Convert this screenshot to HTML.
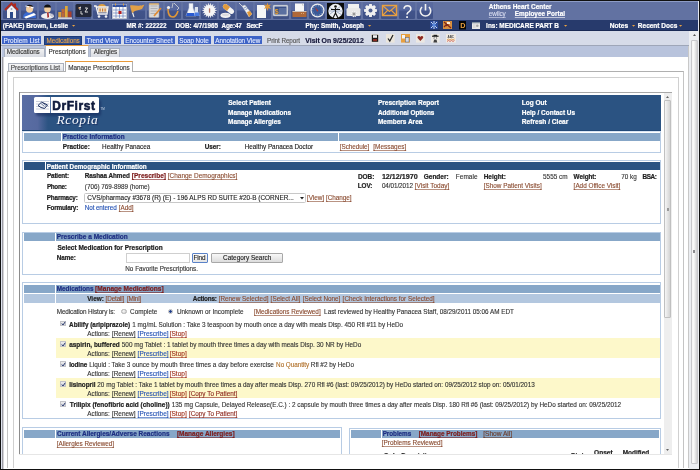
<!DOCTYPE html>
<html><head><meta charset="utf-8">
<style>
html,body{margin:0;padding:0;}
body{width:700px;height:470px;overflow:hidden;position:relative;background:#fff;will-change:transform;font-family:"Liberation Sans",sans-serif;}
.b{position:absolute;box-sizing:border-box;}
.t{position:absolute;white-space:pre;font-family:"Liberation Sans",sans-serif;}
svg{position:absolute;overflow:visible;}
</style></head><body>
<!-- frame -->
<div class="b" style="left:0;top:0;width:700px;height:1px;background:#111"></div>
<div class="b" style="left:0;top:0;width:1px;height:470px;background:#111"></div>
<div class="b" style="left:1px;top:31px;width:1px;height:438px;background:#dfe3ee"></div>
<div class="b" style="left:2px;top:46px;width:1px;height:423px;background:#9c9ca4"></div>
<div class="b" style="left:3px;top:46px;width:1px;height:423px;background:#d4d4d8"></div>
<div class="b" style="left:0;top:468.5px;width:700px;height:1.5px;background:#111"></div>
<div class="b" style="left:698px;top:1px;width:1px;height:468px;background:#e2e6f0"></div>
<div class="b" style="left:698.6px;top:0;width:1.4px;height:470px;background:#111"></div>
<!-- toolbar -->
<div class="b" style="left:1px;top:1px;width:697px;height:19px;background:#6272a2;border-top:1px solid #8d9cc6"></div>
<!-- navy bar -->
<div class="b" style="left:1px;top:20px;width:697px;height:10.5px;background:#273a6c;border-bottom:1px solid #1a2a55"></div>
<!-- light bar -->
<div class="b" style="left:1px;top:30.5px;width:689px;height:15px;background:#d6dbe8;border-bottom:1px solid #9ea6b8"></div>
<!-- blue buttons -->
<div class="b" style="left:2px;top:36px;width:39px;height:8px;background:#3d63c6"></div>
<div class="b" style="left:44px;top:35.5px;width:38px;height:9px;background:#2b4b8e;border:1px solid #1d3a78"></div>
<div class="b" style="left:85px;top:36px;width:36px;height:8px;background:#3d63c6"></div>
<div class="b" style="left:123.7px;top:36px;width:51.2px;height:8px;background:#3d63c6"></div>
<div class="b" style="left:177.7px;top:36px;width:33px;height:8px;background:#3d63c6"></div>
<div class="b" style="left:213.7px;top:36px;width:48.6px;height:8px;background:#3d63c6"></div>
<!-- tab strip -->
<div class="b" style="left:2px;top:46px;width:687px;height:11px;background:#b8c3dc"></div>
<div class="b" style="left:4px;top:47.6px;width:40.6px;height:9.4px;background:linear-gradient(#f2f2f2,#d8dbe2);border:1px solid #a8b0c0;border-bottom:none"></div>
<div class="b" style="left:45px;top:45.3px;width:44.2px;height:11.7px;background:#fff;border-top:1.5px solid #e89a3a;border-left:1px solid #b0b8c8;border-right:1px solid #b0b8c8"></div>
<div class="b" style="left:90.1px;top:47.6px;width:30px;height:9.4px;background:linear-gradient(#f2f2f2,#d8dbe2);border:1px solid #a8b0c0;border-bottom:none"></div>
<!-- content vertical lines -->
<div class="b" style="left:688px;top:46px;width:1px;height:422px;background:#c8c8c8"></div>
<!-- subtabs -->
<div class="b" style="left:7px;top:71px;width:677px;height:397px;border-left:1px solid #c4c4c4;border-top:1px solid #b0b0b0;border-right:1px solid #c4c4c4"></div>
<div class="b" style="left:8.4px;top:62.6px;width:56px;height:8.6px;background:linear-gradient(#f6f6f6,#dde0e6);border:1px solid #aab0bc;border-bottom:none"></div>
<div class="b" style="left:65px;top:61px;width:68px;height:11px;background:#fff;border-top:1.5px solid #e89a3a;border-left:1px solid #b0b0b0;border-right:1px solid #b0b0b0"></div>
<!-- inner frame -->
<div class="b" style="left:13px;top:77px;width:665.5px;height:391px;border-left:1px solid #d0d0d0;border-top:1px solid #d0d0d0;border-right:1px solid #d0d0d0"></div>
<!-- iframe border -->
<div class="b" style="left:19px;top:91.6px;width:653px;height:1.6px;background:#a8a8a8"></div>
<div class="b" style="left:19px;top:92px;width:1.2px;height:361.5px;background:#8c8c8c"></div>
<!-- inner scrollbar -->
<div class="b" style="left:663.5px;top:93px;width:8px;height:360.5px;background:#eeeeee"></div>
<div class="b" style="left:663.8px;top:100px;width:7px;height:218px;background:linear-gradient(90deg,#f6f6f6,#d4d4d4);border:1px solid #c0c0c0;border-radius:1px"></div>
<div class="b" style="left:667px;top:207.5px;width:2px;height:3px;background:#999"></div>
<svg style="left:666px;top:95.5px" width="3" height="2"><path d="M0 2L1.5 0L3 2Z" fill="#666"/></svg>
<svg style="left:666px;top:449px" width="3" height="2"><path d="M0 0L1.5 2L3 0Z" fill="#666"/></svg>
<!-- outer scrollbar -->
<div class="b" style="left:689px;top:31px;width:9.5px;height:437.5px;background:#eceef2"></div>
<div class="b" style="left:691px;top:39.5px;width:7.4px;height:424px;background:linear-gradient(90deg,#f4f4f4,#fafafa 35%,#d0d0d2);border:0.8px solid #c8c8cc;border-radius:1px"></div>
<div class="b" style="left:692.6px;top:249.5px;width:2.6px;height:3.6px;background:#8c8c90"></div>
<svg style="left:692.8px;top:34px" width="3" height="2"><path d="M0 2L1.5 0L3 2Z" fill="#555"/></svg>
<!-- DrFirst header -->
<div class="b" style="left:22px;top:95px;width:639px;height:35.8px;background:#2b5382"></div>
<div class="b" style="left:22px;top:95px;width:26px;height:35.8px;background:linear-gradient(90deg,#5a6ea4 0%,#56699f 60%,#2b5382 100%)"></div>
<div class="b" style="left:22px;top:129.6px;width:639px;height:1.2px;background:#234a78"></div>
<!-- logo -->
<div class="b" style="left:36px;top:99.5px;width:65px;height:16px;background:#14285a;opacity:.55;border-radius:2px;filter:blur(1px)"></div>
<div class="b" style="left:34.3px;top:97px;width:64.3px;height:16.3px;background:#fff;border-radius:1.5px"></div>
<div class="b" style="left:50.4px;top:97px;width:1.1px;height:16.3px;background:#5a78a8"></div>
<svg style="left:35px;top:99px" width="15" height="12"><path d="M1 2.5H14M1 5H14M1 7.5H14M1 10H14" stroke="#b4bccb" stroke-width=".7"/><path d="M3 6.5L6.5 3.2L9 4.2L12.5 6L9.5 9.5L6 8.5Z" fill="#eef1f6" stroke="#1d3060" stroke-width="1"/><path d="M6 4.5L9.5 7.5M8 4L11 6.5" stroke="#1d3060" stroke-width=".6"/></svg>
<span class="t" style="left:52.3px;top:98.7px;font-size:11.9px;line-height:14px;font-weight:bold;color:#0f1a3c;letter-spacing:0.6px;-webkit-text-stroke:0.6px #0f1a3c">DrFirst</span>
<span class="t" style="left:100.5px;top:108px;font-size:3px;line-height:3px;color:#cfd8e8">TM</span>
<span class="t" style="left:56.5px;top:111.5px;font-family:'Liberation Serif',serif;font-style:italic;font-size:13.5px;line-height:15px;color:#f4f6fa;letter-spacing:0.6px;text-shadow:1px 1px 1px #1a3060">Rcopia</span>
<!-- practice box -->
<div class="b" style="left:22px;top:131.4px;width:639px;height:21.8px;border:1px solid #b8cce4;border-top:1px solid #d8e4f2"></div>
<div class="b" style="left:24px;top:133px;width:37px;height:8px;background:#87a7c8"></div>
<div class="b" style="left:62px;top:133px;width:276px;height:8px;background:#87a7c8"></div>
<div class="b" style="left:339px;top:133px;width:321px;height:8px;background:#87a7c8"></div>
<!-- demographic box -->
<div class="b" style="left:22px;top:160.3px;width:639px;height:63.5px;border:1px solid #b8cce4"></div>
<div class="b" style="left:24px;top:162px;width:20.6px;height:8.3px;background:#2b5382"></div>
<div class="b" style="left:45.5px;top:162px;width:614.5px;height:8.3px;background:#2b5382"></div>
<div class="b" style="left:84.3px;top:192.8px;width:221.5px;height:10.4px;background:#fff;border:1px solid #c8c8c8;border-radius:1.5px"></div>
<svg style="left:299.5px;top:197px" width="4" height="3"><path d="M0 0L2 2.5L4 0Z" fill="#222"/></svg>
<!-- prescribe box -->
<div class="b" style="left:22px;top:231.6px;width:639px;height:43.2px;border:1px solid #b8cce4"></div>
<div class="b" style="left:24px;top:233.3px;width:30.8px;height:8.2px;background:#87a7c8"></div>
<div class="b" style="left:55.8px;top:233.3px;width:604.2px;height:8.2px;background:#87a7c8"></div>
<div class="b" style="left:125.5px;top:253px;width:64px;height:10px;background:#fff;border:1px solid #cfcfcf"></div>
<div class="b" style="left:192px;top:253px;width:16.4px;height:10px;background:linear-gradient(#fbfbfb,#e4e4e4);border:1px solid #5a82c8;border-radius:1px"></div>
<div class="b" style="left:211.4px;top:253px;width:71.7px;height:10px;background:linear-gradient(#f8f8f8,#dcdcdc);border:1px solid #a8a8a8;border-radius:1px"></div>
<!-- medications box -->
<div class="b" style="left:22px;top:282.3px;width:639px;height:137px;border:1px solid #b8cce4"></div>
<div class="b" style="left:24px;top:284.6px;width:30.8px;height:8px;background:#87a7c8"></div>
<div class="b" style="left:55.8px;top:284.6px;width:604.2px;height:8px;background:#87a7c8"></div>
<div class="b" style="left:24px;top:294px;width:30.8px;height:9.4px;background:#b3c7df"></div>
<div class="b" style="left:55.8px;top:294px;width:604.2px;height:9.4px;background:#b3c7df"></div>
<div class="b" style="left:56.3px;top:338.2px;width:603.7px;height:20px;background:#fdf8ca"></div>
<div class="b" style="left:56.3px;top:378px;width:603.7px;height:20px;background:#fdf8ca"></div>
<!-- radios -->
<div class="b" style="left:121px;top:308.6px;width:5.5px;height:5.5px;border-radius:50%;background:radial-gradient(circle at 40% 35%,#fafafa,#c4c4c4);border:0.6px solid #b0b0b0"></div>
<div class="b" style="left:167.8px;top:308.6px;width:5.5px;height:5.5px;border-radius:50%;background:radial-gradient(circle,#1f3a80 0,#2c4c98 50%,#a8b8dc 70%,#eef0f4 100%);border:0.6px solid #b8b8b8"></div>
<!-- checkboxes -->
<div class="b" style="left:59.8px;top:320.7px;width:5.8px;height:5.8px;border:0.8px solid #c4c4c8;background:linear-gradient(#ececec,#d4d6dc)"></div>
<div class="b" style="left:60px;top:341px;width:5.8px;height:5.8px;border:0.8px solid #c4c4c8;background:linear-gradient(#ececec,#d4d6dc)"></div>
<div class="b" style="left:60px;top:361px;width:5.8px;height:5.8px;border:0.8px solid #c4c4c8;background:linear-gradient(#ececec,#d4d6dc)"></div>
<div class="b" style="left:60px;top:381px;width:5.8px;height:5.8px;border:0.8px solid #c4c4c8;background:linear-gradient(#ececec,#d4d6dc)"></div>
<div class="b" style="left:60px;top:401px;width:5.8px;height:5.8px;border:0.8px solid #c4c4c8;background:linear-gradient(#ececec,#d4d6dc)"></div>
<svg style="left:60.7px;top:321.4px" width="5" height="5"><path d="M0.8 2.5L2 4L4.2 0.8" stroke="#2a3a70" stroke-width="1" fill="none"/></svg>
<svg style="left:60.9px;top:341.7px" width="5" height="5"><path d="M0.8 2.5L2 4L4.2 0.8" stroke="#2a3a70" stroke-width="1" fill="none"/></svg>
<svg style="left:60.9px;top:361.7px" width="5" height="5"><path d="M0.8 2.5L2 4L4.2 0.8" stroke="#2a3a70" stroke-width="1" fill="none"/></svg>
<svg style="left:60.9px;top:381.7px" width="5" height="5"><path d="M0.8 2.5L2 4L4.2 0.8" stroke="#2a3a70" stroke-width="1" fill="none"/></svg>
<svg style="left:60.9px;top:401.7px" width="5" height="5"><path d="M0.8 2.5L2 4L4.2 0.8" stroke="#2a3a70" stroke-width="1" fill="none"/></svg>
<!-- allergies box -->
<div class="b" style="left:22px;top:427.3px;width:319.5px;height:30px;border:1px solid #b8cce4;border-bottom:none"></div>
<div class="b" style="left:24px;top:429.6px;width:31.2px;height:8px;background:#87a7c8"></div>
<div class="b" style="left:56.2px;top:429.6px;width:284px;height:8px;background:#87a7c8"></div>
<!-- problems box -->
<div class="b" style="left:348.8px;top:427.5px;width:312.2px;height:30px;border:1px solid #b8cce4;border-bottom:none"></div>
<div class="b" style="left:350.8px;top:429.6px;width:29.9px;height:8px;background:#87a7c8"></div>
<div class="b" style="left:381.7px;top:429.6px;width:277.3px;height:8px;background:#87a7c8"></div>
<div class="b" style="left:2.5px;top:2px;width:16.5px;height:17px;background:linear-gradient(#5b6b9e 0%,#5668a0 48%,#41538a 52%,#3f5186 100%);border-radius:1px"></div>
<div class="b" style="left:20.5px;top:2px;width:16.5px;height:17px;background:linear-gradient(#5b6b9e 0%,#5668a0 48%,#41538a 52%,#3f5186 100%);border-radius:1px"></div>
<div class="b" style="left:38.5px;top:2px;width:16.5px;height:17px;background:linear-gradient(#5b6b9e 0%,#5668a0 48%,#41538a 52%,#3f5186 100%);border-radius:1px"></div>
<div class="b" style="left:56.5px;top:2px;width:16.5px;height:17px;background:linear-gradient(#5b6b9e 0%,#5668a0 48%,#41538a 52%,#3f5186 100%);border-radius:1px"></div>
<div class="b" style="left:74.5px;top:2px;width:16.5px;height:17px;background:linear-gradient(#5b6b9e 0%,#5668a0 48%,#41538a 52%,#3f5186 100%);border-radius:1px"></div>
<div class="b" style="left:92.5px;top:2px;width:16.5px;height:17px;background:linear-gradient(#5b6b9e 0%,#5668a0 48%,#41538a 52%,#3f5186 100%);border-radius:1px"></div>
<div class="b" style="left:110.5px;top:2px;width:16.5px;height:17px;background:linear-gradient(#5b6b9e 0%,#5668a0 48%,#41538a 52%,#3f5186 100%);border-radius:1px"></div>
<div class="b" style="left:128.5px;top:2px;width:16.5px;height:17px;background:linear-gradient(#5b6b9e 0%,#5668a0 48%,#41538a 52%,#3f5186 100%);border-radius:1px"></div>
<div class="b" style="left:146.5px;top:2px;width:16.5px;height:17px;background:linear-gradient(#5b6b9e 0%,#5668a0 48%,#41538a 52%,#3f5186 100%);border-radius:1px"></div>
<div class="b" style="left:164.5px;top:2px;width:16.5px;height:17px;background:linear-gradient(#5b6b9e 0%,#5668a0 48%,#41538a 52%,#3f5186 100%);border-radius:1px"></div>
<div class="b" style="left:182.5px;top:2px;width:16.5px;height:17px;background:linear-gradient(#5b6b9e 0%,#5668a0 48%,#41538a 52%,#3f5186 100%);border-radius:1px"></div>
<div class="b" style="left:200.5px;top:2px;width:16.5px;height:17px;background:linear-gradient(#5b6b9e 0%,#5668a0 48%,#41538a 52%,#3f5186 100%);border-radius:1px"></div>
<div class="b" style="left:218.5px;top:2px;width:16.5px;height:17px;background:linear-gradient(#5b6b9e 0%,#5668a0 48%,#41538a 52%,#3f5186 100%);border-radius:1px"></div>
<div class="b" style="left:236.5px;top:2px;width:16.5px;height:17px;background:linear-gradient(#5b6b9e 0%,#5668a0 48%,#41538a 52%,#3f5186 100%);border-radius:1px"></div>
<div class="b" style="left:254.5px;top:2px;width:16.5px;height:17px;background:linear-gradient(#5b6b9e 0%,#5668a0 48%,#41538a 52%,#3f5186 100%);border-radius:1px"></div>
<div class="b" style="left:272.5px;top:2px;width:16.5px;height:17px;background:linear-gradient(#5b6b9e 0%,#5668a0 48%,#41538a 52%,#3f5186 100%);border-radius:1px"></div>
<div class="b" style="left:290.5px;top:2px;width:16.5px;height:17px;background:linear-gradient(#5b6b9e 0%,#5668a0 48%,#41538a 52%,#3f5186 100%);border-radius:1px"></div>
<div class="b" style="left:308.5px;top:2px;width:16.5px;height:17px;background:linear-gradient(#5b6b9e 0%,#5668a0 48%,#41538a 52%,#3f5186 100%);border-radius:1px"></div>
<div class="b" style="left:326.5px;top:2px;width:16.5px;height:17px;background:linear-gradient(#5b6b9e 0%,#5668a0 48%,#41538a 52%,#3f5186 100%);border-radius:1px"></div>
<div class="b" style="left:344.5px;top:2px;width:16.5px;height:17px;background:linear-gradient(#5b6b9e 0%,#5668a0 48%,#41538a 52%,#3f5186 100%);border-radius:1px"></div>
<div class="b" style="left:362.5px;top:2px;width:16.5px;height:17px;background:linear-gradient(#5b6b9e 0%,#5668a0 48%,#41538a 52%,#3f5186 100%);border-radius:1px"></div>
<div class="b" style="left:380.5px;top:2px;width:16.5px;height:17px;background:linear-gradient(#5b6b9e 0%,#5668a0 48%,#41538a 52%,#3f5186 100%);border-radius:1px"></div>
<div class="b" style="left:398.5px;top:2px;width:16.5px;height:17px;background:linear-gradient(#5b6b9e 0%,#5668a0 48%,#41538a 52%,#3f5186 100%);border-radius:1px"></div>
<div class="b" style="left:416.5px;top:2px;width:16.5px;height:17px;background:linear-gradient(#5b6b9e 0%,#5668a0 48%,#41538a 52%,#3f5186 100%);border-radius:1px"></div>
<svg style="left:3px;top:2px" width="17" height="17" viewBox="0 0 17 17"><path d="M2 8L8.5 1.5L15 8" stroke="#b02a1e" stroke-width="2" fill="none"/><rect x="11" y="1.5" width="2" height="4" fill="#b02a1e"/><path d="M4 8L8.5 3.5L13 8V16H4Z" fill="#f4f4f4"/><rect x="7" y="10" width="3" height="6" fill="#2a4a8a"/><circle cx="8.5" cy="7" r="1" fill="#9ab"/></svg>
<svg style="left:20.5px;top:2px" width="17" height="17" viewBox="0 0 17 17"><path d="M2 16C2 11 5 10 8.5 10C12 10 15 11 15 16Z" fill="#3a6ad0"/><path d="M3 15L13 11L15 13L5 16.5Z" fill="#fff"/><ellipse cx="8.5" cy="7" rx="3.5" ry="3.8" fill="#f2cfa0"/><path d="M5 5C5 2 12 2 12 5Z" fill="#111"/><path d="M4.5 4.5L12.5 6.5L12.5 5L4.5 3.5Z" fill="#fff"/><circle cx="9" cy="5" r="0.8" fill="#e08040"/></svg>
<svg style="left:38.5px;top:2px" width="17" height="17" viewBox="0 0 17 17"><ellipse cx="8.5" cy="14" rx="6.5" ry="3" fill="#f0f0f0"/><path d="M8 10L9.5 10L10 15L8.5 16Z" fill="#a02020"/><ellipse cx="8.5" cy="7" rx="3.3" ry="3.6" fill="#f2cfa0"/><path d="M5 5.5C5 1.5 12 1.5 12 5.5Z" fill="#111"/><circle cx="13" cy="13" r="1.3" fill="none" stroke="#88a" stroke-width=".6"/></svg>
<svg style="left:56px;top:2px" width="17" height="17" viewBox="0 0 17 17"><rect x="2.3" y="10" width="3" height="5.5" fill="#d8a040"/><rect x="5.5" y="7" width="3.3" height="8.5" fill="#b86a3a"/><rect x="9" y="4" width="2.7" height="11.5" fill="#e0a838"/><rect x="12" y="9.5" width="3.5" height="6" fill="#a8402e"/><rect x="2" y="15.5" width="14" height="1.3" fill="#f0f0f4"/><rect x="6.5" y="10" width="1" height="1" fill="#c04030"/></svg>
<svg style="left:74.5px;top:2px" width="17" height="17" viewBox="0 0 17 17"><rect x="0.5" y="2" width="16" height="13" rx="1.5" fill="#232838"/><path d="M4 6L6 5M5 5L5 8" stroke="#f0f0f0" stroke-width="1" fill="none"/><path d="M6 9V12H8" stroke="#d0d0d0" stroke-width="1" fill="none"/><path d="M10 6H12.5L10 10H13" stroke="#e0e0e0" stroke-width="1" fill="none"/><circle cx="4" cy="6" r=".8" fill="#e09040"/></svg>
<svg style="left:93px;top:2px" width="17" height="17" viewBox="0 0 17 17"><path d="M5 5C5 1 13 1 13 5Z" fill="#e0a040"/><path d="M1 4H3L5 12H14L15 5H3" stroke="#f4f4f4" stroke-width="1.3" fill="none"/><rect x="5" y="5.5" width="9" height="5" fill="#f0e0c8"/><rect x="6.5" y="6.5" width="1.2" height="3" fill="#c87830"/><rect x="9" y="6.5" width="1.2" height="3" fill="#c87830"/><rect x="11.5" y="6.5" width="1.2" height="3" fill="#c87830"/><circle cx="6" cy="14.5" r="1.3" fill="#f4f4f4"/><circle cx="13" cy="14.5" r="1.3" fill="#f4f4f4"/></svg>
<svg style="left:111px;top:2px" width="17" height="17" viewBox="0 0 17 17"><rect x="1.5" y="2.5" width="14" height="14" fill="#f8f8f8" stroke="#c8ccd8" stroke-width=".8"/><rect x="1.5" y="2.5" width="14" height="2.5" fill="#3050a0"/><path d="M2 8H15M2 11H15M2 14H15M5 5V16M8.5 5V16M12 5V16" stroke="#3a5aa8" stroke-width=".5"/><rect x="7.5" y="9" width="3" height="3" fill="#b82020"/><rect x="4" y="1.5" width="1" height="2" fill="#e0a040"/><rect x="12" y="1.5" width="1" height="2" fill="#e0a040"/></svg>
<svg style="left:129px;top:2px" width="17" height="17" viewBox="0 0 17 17"><path d="M1 3.5C5 2.5 10 5 15.5 2.5L13 7C10 8.5 7 8 5 9.5C4 10.5 3.5 11 3 11.5C2.5 9 1.5 6 1 3.5Z" fill="#e0a048"/><path d="M3 11L4.2 10.5L5.5 15L4.5 15.3Z" fill="#f4f4f4"/></svg>
<svg style="left:147px;top:2px" width="17" height="17" viewBox="0 0 17 17"><rect x="2" y="1.5" width="10" height="14" rx="1" fill="#d8d8d8" stroke="#a0a0a8" stroke-width=".6"/><path d="M3.5 4H10.5M3.5 6.5H10.5M3.5 9H10.5M3.5 11.5H10.5" stroke="#8a8a90" stroke-width=".5"/><path d="M7 14L14 6" stroke="#e08a30" stroke-width="1.6"/><rect x="2" y="1.5" width="10" height="1" fill="#e0a040"/></svg>
<svg style="left:165px;top:2px" width="17" height="17" viewBox="0 0 17 17"><path d="M3 7C3 12 5 15 8 15C11 15 12 12 13 9" stroke="#e09838" stroke-width="1.6" fill="none"/><circle cx="3.5" cy="5.5" r="1.6" fill="#f0f0f0"/><path d="M8 1L7 6M9 1L14 6L12 8" stroke="#d8d8d8" stroke-width=".8" fill="none"/></svg>
<svg style="left:183.5px;top:2px" width="17" height="17" viewBox="0 0 17 17"><path d="M5 1.5H9V6L12 14H2L5 6Z" fill="#f4f6fa" stroke="#c0c8d8" stroke-width=".5"/><path d="M3 11H11L12 14H2Z" fill="#2a5ad0"/><path d="M11 5H14V9L15.5 14H10Z" fill="#dde4f0"/><path d="M11 10.5H15L15.5 14H10Z" fill="#4a7ae0"/></svg>
<svg style="left:201px;top:2px" width="17" height="17" viewBox="0 0 17 17"><path d="M16.30 8.50 L13.62 9.40 L15.83 11.17 L13.00 11.10 L14.48 13.51 L11.84 12.48 L12.40 15.25 L10.28 13.39 L9.85 16.18 L8.50 13.70 L7.15 16.18 L6.72 13.39 L4.60 15.25 L5.16 12.48 L2.52 13.51 L4.00 11.10 L1.17 11.17 L3.38 9.40 L0.70 8.50 L3.38 7.60 L1.17 5.83 L4.00 5.90 L2.52 3.49 L5.16 4.52 L4.60 1.75 L6.72 3.61 L7.15 0.82 L8.50 3.30 L9.85 0.82 L10.28 3.61 L12.40 1.75 L11.84 4.52 L14.48 3.49 L13.00 5.90 L15.83 5.83 L13.62 7.60Z" fill="#e4e6ec"/><circle cx="8.5" cy="8.5" r="5.3" fill="#f6f6f6"/><rect x="7.9" y="6.2" width="1.3" height="4.6" rx=".6" fill="#b07060"/></svg>
<svg style="left:219px;top:2px" width="17" height="17" viewBox="0 0 17 17"><g transform="rotate(38 9.5 7)"><rect x="3" y="4.5" width="13" height="5" rx="2.5" fill="#f4f4f4"/><path d="M5.5 4.5H9.5V9.5H5.5A2.5 2.5 0 0 1 5.5 4.5Z" fill="#e09a3c"/></g><ellipse cx="6.5" cy="13.3" rx="5" ry="2.6" fill="#f2f2f2"/><ellipse cx="6.5" cy="12.8" rx="3.6" ry="1.4" fill="#dcdce0"/></svg>
<svg style="left:237px;top:2px" width="17" height="17" viewBox="0 0 17 17"><path d="M2 1L6 5" stroke="#e8e8e8" stroke-width=".8"/><path d="M5 4L8 3L15 12L12 15Z" fill="#f0f0f0" stroke="#a8b0c0" stroke-width=".4"/><path d="M10 10L13 9L15 12L12 15Z" fill="#e0983a"/><path d="M7 6L9 5M8.5 7.5L10.5 6.5" stroke="#4060a0" stroke-width=".6"/></svg>
<svg style="left:254.5px;top:2px" width="17" height="17" viewBox="0 0 17 17"><path d="M2 3H9L11 5V16H2Z" fill="#f6f6f6"/><path d="M12.5 0.5L13.3 3L16 2.5L14.3 4.5L16 6.8L13.3 6.2L12.5 9L11.5 6.2L9 6.8L10.7 4.5L9 2.5L11.7 3Z" fill="#e09838"/></svg>
<svg style="left:272px;top:2px" width="17" height="17" viewBox="0 0 17 17"><rect x="1" y="3" width="15" height="11" rx="1" fill="#d8dce4" stroke="#9098a8" stroke-width=".5"/><rect x="2.5" y="4.5" width="12" height="8" fill="#3a5088"/><path d="M7 7H14M7 9H14M7 11H14" stroke="#a8b8d8" stroke-width=".6"/><text x="2.8" y="11.5" font-family="Liberation Sans" font-weight="bold" font-size="7" fill="#e8a030">$</text></svg>
<svg style="left:290.5px;top:2px" width="17" height="17" viewBox="0 0 17 17"><rect x="4" y="1.5" width="9" height="9" fill="#f8f8f8"/><path d="M11 1.5L13 3.5H11Z" fill="#c8c8c8"/><rect x="1.5" y="9" width="14" height="6" fill="#b06838"/><rect x="10" y="11" width=".8" height=".8" fill="#f0d0a0"/><rect x="12" y="11" width=".8" height=".8" fill="#f0d0a0"/><rect x="1.5" y="9" width="14" height=".8" fill="#d8d8d8"/></svg>
<svg style="left:308.5px;top:2px" width="17" height="17" viewBox="0 0 17 17"><circle cx="8.5" cy="8.5" r="7" fill="#f0f0f0"/><circle cx="8.5" cy="8.5" r="5.8" fill="#3a5a98"/><circle cx="8.5" cy="8.5" r="4.8" fill="none" stroke="#e8ecf4" stroke-width=".6" stroke-dasharray="1 1.5"/><path d="M6 5L9.5 9L8 9.5Z" fill="#c83020"/></svg>
<svg style="left:326.5px;top:2px" width="17" height="17" viewBox="0 0 17 17"><rect x="0" y="1" width="17" height="16" fill="#0a0a0a"/><circle cx="8.5" cy="9" r="7.2" fill="#eef0f4"/><path d="M2 5L15 13M3 12L14 4M1.5 9H15.5" stroke="#8898b8" stroke-width=".7"/><circle cx="8.5" cy="4.5" r="1.3" fill="#111"/><path d="M8.5 6V11M4 7.5H13M8.5 11L6 16M8.5 11L11 16" stroke="#111" stroke-width="1.1"/></svg>
<svg style="left:344.5px;top:2px" width="17" height="17" viewBox="0 0 17 17"><rect x="3" y="2" width="11" height="5" fill="#f0f0f0"/><rect x="1.5" y="6" width="14" height="8" rx="1.5" fill="#e8e8e8"/><circle cx="9" cy="12" r="2.6" fill="#c8c8c8" stroke="#f4f4f4" stroke-width="1.2" stroke-dasharray="1.2 0.8"/><circle cx="9" cy="12" r="1" fill="#888"/></svg>
<svg style="left:362px;top:2px" width="17" height="17" viewBox="0 0 17 17"><path d="M12.83 6.94 L14.96 7.14 L14.96 9.86 L12.83 10.06 L12.66 10.46 L14.03 12.11 L12.11 14.03 L10.46 12.66 L10.06 12.83 L9.86 14.96 L7.14 14.96 L6.94 12.83 L6.54 12.66 L4.89 14.03 L2.97 12.11 L4.34 10.46 L4.17 10.06 L2.04 9.86 L2.04 7.14 L4.17 6.94 L4.34 6.54 L2.97 4.89 L4.89 2.97 L6.54 4.34 L6.94 4.17 L7.14 2.04 L9.86 2.04 L10.06 4.17 L10.46 4.34 L12.11 2.97 L14.03 4.89 L12.66 6.54Z" fill="#f0f0f0"/><circle cx="8.5" cy="8.5" r="5" fill="#f0f0f0"/><circle cx="8.5" cy="8.5" r="2" fill="#4f6091"/></svg>
<svg style="left:380.5px;top:2px" width="17" height="17" viewBox="0 0 17 17"><rect x="1.5" y="3.5" width="14" height="10" fill="none" stroke="#e8a040" stroke-width="1.5"/><path d="M2 4L8.5 9.5L15 4M2 13L6.5 8.5M15 13L10.5 8.5" stroke="#e8a040" stroke-width="1.1" fill="none"/></svg>
<svg style="left:398.5px;top:2px" width="17" height="17" viewBox="0 0 17 17"><text x="3.6" y="16.3" font-family="Liberation Sans" font-size="17.5" fill="#f4f4f4">?</text></svg>
<svg style="left:416.5px;top:2px" width="17" height="17" viewBox="0 0 17 17"><path d="M5 5A5.2 5.2 0 1 0 12 5" stroke="#f0f0f0" stroke-width="1.6" fill="none"/><path d="M8.5 2V8.5" stroke="#f0f0f0" stroke-width="1.6"/></svg>
<svg style="left:430px;top:21px" width="8" height="8"><rect width="8" height="8" fill="#2a4a9a"/><path d="M1 1L7 7M7 1L1 7M4 0V8" stroke="#c8d8f0" stroke-width="1"/><rect x="2.5" y="2.5" width="3" height="3" fill="#5a8ae0"/></svg>
<svg style="left:443px;top:21px" width="9" height="8"><rect width="9" height="8" fill="#d89040"/><path d="M1 1L8 7M7 1L3 5M1 6L4 3" stroke="#802818" stroke-width="1.3"/><rect x="4" y="1" width="3" height="2" fill="#fff0d8"/></svg>
<svg style="left:458.6px;top:21px" width="7" height="8.5"><rect width="7" height="8.5" fill="#050505"/><text x="1.2" y="7" font-family="Liberation Sans" font-weight="bold" font-size="7.2" fill="#e8a040">D</text></svg>
<svg style="left:472px;top:21.5px" width="8" height="7"><rect width="8" height="7" fill="#e8e8e8"/><rect x="0" y="0" width="8" height="1.3" fill="#8090a0"/><circle cx="5.3" cy="3.8" r="1.3" fill="#a8a8a8"/><path d="M1 3H3.5M1 5H3.5" stroke="#b8b8b8" stroke-width=".6"/></svg>
<svg style="left:72px;top:25.3px" width="3.5" height="2"><path d="M0 0H3.2L1.6 1.8Z" fill="#e8a040"/></svg>
<svg style="left:367.5px;top:25.3px" width="3.5" height="2"><path d="M0 0H3.2L1.6 1.8Z" fill="#e8a040"/></svg>
<svg style="left:563.5px;top:25.3px" width="3.5" height="2"><path d="M0 0H3.2L1.6 1.8Z" fill="#e8a040"/></svg>
<svg style="left:632px;top:25.3px" width="3.5" height="2"><path d="M0 0H3.2L1.6 1.8Z" fill="#e8a040"/></svg>
<svg style="left:679px;top:25.3px" width="3.5" height="2"><path d="M0 0H3.2L1.6 1.8Z" fill="#e8a040"/></svg>
<svg style="left:370.7px;top:33.7px" width="8" height="8.6"><rect width="8" height="8.6" fill="#e6e2dc"/><rect x=".8" y=".8" width="6.4" height="7" fill="#1a1a1a"/><rect x="2" y="1.2" width="4" height="2.6" fill="#f0f0f0"/><rect x="2" y="5" width="4" height="2.2" fill="#8a2a20"/></svg>
<svg style="left:385.7px;top:33.7px" width="8.6" height="8.6"><rect width="8.6" height="8.6" fill="#ebe6dc"/><path d="M2 4.5L3.8 7L7 1" stroke="#202020" stroke-width="1.2" fill="none"/></svg>
<svg style="left:400.7px;top:33.7px" width="9" height="8.6"><rect width="9" height="8.6" fill="#e8a040"/><rect x="1" y="1" width="3" height="3.5" fill="#f4f4f4"/><rect x="4.5" y="3.5" width="3.5" height="4.5" fill="#d8dce8" stroke="#506080" stroke-width=".5"/></svg>
<svg style="left:416px;top:33.7px" width="8.7" height="8.6"><rect width="8.7" height="8.6" fill="#ece8e2"/><path d="M4.35 7L1.8 4.3C1 3.3 1.6 2 2.8 2C3.6 2 4 2.4 4.35 3C4.7 2.4 5.1 2 5.9 2C7.1 2 7.7 3.3 6.9 4.3Z" fill="#8e2a22"/></svg>
<svg style="left:431.4px;top:33.7px" width="8.6" height="8.6"><rect width="8.6" height="8.6" fill="#ece9e4"/><path d="M1 2.2H7.6" stroke="#151515" stroke-width="1.1"/><rect x="2.5" y="0.8" width="3.6" height="1.6" fill="#202020"/><circle cx="4.3" cy="4.2" r="1.4" fill="#f4f0ea" stroke="#404040" stroke-width=".5"/><path d="M2.3 8.6L3 6H5.6L6.3 8.6Z" fill="#404040"/></svg>
<svg style="left:446.4px;top:33.7px" width="10" height="8.6"><rect width="10" height="8.6" fill="#eee9e2"/><text x="1.5" y="4" font-family="Liberation Sans" font-weight="bold" font-size="3" fill="#404040">ABC</text><path d="M1 6L2.5 5L4 6L5.5 5L7 6L8.5 5" stroke="#e09030" stroke-width=".8" fill="none"/><path d="M1 7.5L2.5 6.5L4 7.5L5.5 6.5L7 7.5L8.5 6.5" stroke="#c83020" stroke-width=".6" fill="none"/></svg>
<span class="t" style="left:2.81px;top:23.00px;font-size:6.477px;line-height:6.477px;color:#fff;font-weight:bold;-webkit-text-stroke:0.2px #fff;">(FAKE) Brown, Leslie</span>
<span class="t" style="left:126.51px;top:23.00px;font-size:6.350px;line-height:6.350px;color:#fff;letter-spacing:-0.022px;font-weight:bold;-webkit-text-stroke:0.2px #fff;">MR #: 222222</span>
<span class="t" style="left:175.51px;top:23.00px;font-size:6.350px;line-height:6.350px;color:#fff;letter-spacing:-0.009px;font-weight:bold;-webkit-text-stroke:0.2px #fff;">DOB: 4/7/1965</span>
<span class="t" style="left:221.51px;top:23.00px;font-size:6.350px;line-height:6.350px;color:#fff;letter-spacing:-0.175px;font-weight:bold;-webkit-text-stroke:0.2px #fff;">Age:47</span>
<span class="t" style="left:246.51px;top:23.00px;font-size:6.350px;line-height:6.350px;color:#fff;letter-spacing:-0.348px;font-weight:bold;-webkit-text-stroke:0.2px #fff;">Sex:F</span>
<span class="t" style="left:305.61px;top:23.00px;font-size:6.350px;line-height:6.350px;color:#fff;letter-spacing:-0.031px;font-weight:bold;-webkit-text-stroke:0.2px #fff;">Phy: Smith, Joseph</span>
<span class="t" style="left:486.11px;top:23.00px;font-size:6.443px;line-height:6.443px;color:#fff;font-weight:bold;-webkit-text-stroke:0.2px #fff;">Ins: MEDICARE PART B</span>
<span class="t" style="left:609.80px;top:23.00px;font-size:6.622px;line-height:6.622px;color:#fff;font-weight:bold;-webkit-text-stroke:0.2px #fff;">Notes</span>
<span class="t" style="left:637.80px;top:23.00px;font-size:6.521px;line-height:6.521px;color:#fff;font-weight:bold;-webkit-text-stroke:0.2px #fff;">Recent Docs</span>
<span class="t" style="left:488.80px;top:4.00px;font-size:6.516px;line-height:6.516px;color:#fff;font-weight:bold;-webkit-text-stroke:0.2px #fff;">Athens Heart Center</span>
<span class="t" style="left:488.81px;top:11.00px;font-size:6.350px;line-height:6.350px;color:#d8dcf0;letter-spacing:-0.058px;-webkit-text-stroke:0.12px #d8dcf0;text-decoration:underline;text-decoration-color:#d8dcf099;">ewilcy</span>
<span class="t" style="left:514.81px;top:11.00px;font-size:6.419px;line-height:6.419px;color:#fff;font-weight:bold;-webkit-text-stroke:0.2px #fff;text-decoration:underline;text-decoration-color:#ffffff99;">Employee Portal</span>
<span class="t" style="left:3.61px;top:38.00px;font-size:6.478px;line-height:6.478px;color:#e6ecff;-webkit-text-stroke:0.12px #e6ecff;">Problem List</span>
<span class="t" style="left:46.51px;top:38.00px;font-size:6.350px;line-height:6.350px;color:#e8a34a;letter-spacing:-0.058px;-webkit-text-stroke:0.12px #e8a34a;">Medications</span>
<span class="t" style="left:86.81px;top:38.00px;font-size:6.397px;line-height:6.397px;color:#e6ecff;-webkit-text-stroke:0.12px #e6ecff;">Trend View</span>
<span class="t" style="left:125.31px;top:38.00px;font-size:6.376px;line-height:6.376px;color:#e6ecff;-webkit-text-stroke:0.12px #e6ecff;">Encounter Sheet</span>
<span class="t" style="left:179.31px;top:38.00px;font-size:6.350px;line-height:6.350px;color:#e6ecff;letter-spacing:-0.063px;-webkit-text-stroke:0.12px #e6ecff;">Soap Note</span>
<span class="t" style="left:215.31px;top:38.00px;font-size:6.350px;line-height:6.350px;color:#e6ecff;letter-spacing:-0.056px;-webkit-text-stroke:0.12px #e6ecff;">Annotation View</span>
<span class="t" style="left:267.01px;top:38.00px;font-size:6.350px;line-height:6.350px;color:#555;letter-spacing:-0.071px;-webkit-text-stroke:0.12px #555;">Print Report</span>
<span class="t" style="left:305.29px;top:38.00px;font-size:6.905px;line-height:6.905px;color:#16183a;font-weight:bold;-webkit-text-stroke:0.2px #16183a;">Visit On 9/25/2012</span>
<span class="t" style="left:6.71px;top:49.00px;font-size:6.350px;line-height:6.350px;color:#333;letter-spacing:-0.078px;-webkit-text-stroke:0.12px #333;">Medications</span>
<span class="t" style="left:48.51px;top:49.00px;font-size:6.436px;line-height:6.436px;color:#333;-webkit-text-stroke:0.12px #333;">Prescriptions</span>
<span class="t" style="left:93.71px;top:49.00px;font-size:6.350px;line-height:6.350px;color:#333;letter-spacing:-0.094px;-webkit-text-stroke:0.12px #333;">Allergies</span>
<span class="t" style="left:10.81px;top:65.00px;font-size:6.488px;line-height:6.488px;color:#444;-webkit-text-stroke:0.12px #444;">Prescriptions List</span>
<span class="t" style="left:68.21px;top:65.00px;font-size:6.369px;line-height:6.369px;color:#333;-webkit-text-stroke:0.12px #333;">Manage Prescriptions</span>
<span class="t" style="left:228.31px;top:100.00px;font-size:6.496px;line-height:6.496px;color:#fff;font-weight:bold;-webkit-text-stroke:0.2px #fff;">Select Patient</span>
<span class="t" style="left:228.11px;top:110.00px;font-size:6.452px;line-height:6.452px;color:#fff;font-weight:bold;-webkit-text-stroke:0.2px #fff;">Manage Medications</span>
<span class="t" style="left:228.11px;top:119.00px;font-size:6.448px;line-height:6.448px;color:#fff;font-weight:bold;-webkit-text-stroke:0.2px #fff;">Manage Allergies</span>
<span class="t" style="left:377.90px;top:100.00px;font-size:6.556px;line-height:6.556px;color:#fff;font-weight:bold;-webkit-text-stroke:0.2px #fff;">Prescription Report</span>
<span class="t" style="left:377.91px;top:110.00px;font-size:6.350px;line-height:6.350px;color:#fff;letter-spacing:-0.017px;font-weight:bold;-webkit-text-stroke:0.2px #fff;">Additional Options</span>
<span class="t" style="left:377.91px;top:119.00px;font-size:6.492px;line-height:6.492px;color:#fff;font-weight:bold;-webkit-text-stroke:0.2px #fff;">Members Area</span>
<span class="t" style="left:521.81px;top:100.00px;font-size:6.498px;line-height:6.498px;color:#fff;font-weight:bold;-webkit-text-stroke:0.2px #fff;">Log Out</span>
<span class="t" style="left:521.81px;top:110.00px;font-size:6.450px;line-height:6.450px;color:#fff;font-weight:bold;-webkit-text-stroke:0.2px #fff;">Help / Contact Us</span>
<span class="t" style="left:521.80px;top:119.00px;font-size:6.602px;line-height:6.602px;color:#fff;font-weight:bold;-webkit-text-stroke:0.2px #fff;">Refresh / Clear</span>
<span class="t" style="left:62.71px;top:134.00px;font-size:6.423px;line-height:6.423px;color:#1d2e82;font-weight:bold;-webkit-text-stroke:0.2px #1d2e82;">Practice Information</span>
<span class="t" style="left:62.71px;top:144.00px;font-size:6.415px;line-height:6.415px;color:#222;font-weight:bold;-webkit-text-stroke:0.2px #222;">Practice:</span>
<span class="t" style="left:102.11px;top:144.00px;font-size:6.350px;line-height:6.350px;color:#222;letter-spacing:-0.012px;-webkit-text-stroke:0.12px #222;">Healthy Panacea</span>
<span class="t" style="left:204.81px;top:144.00px;font-size:6.350px;line-height:6.350px;color:#222;letter-spacing:-0.034px;font-weight:bold;-webkit-text-stroke:0.2px #222;">User:</span>
<span class="t" style="left:244.81px;top:144.00px;font-size:6.350px;line-height:6.350px;color:#222;letter-spacing:-0.020px;-webkit-text-stroke:0.12px #222;">Healthy Panacea Doctor</span>
<span class="t" style="left:339.81px;top:144.00px;font-size:6.350px;line-height:6.350px;color:#8a4b30;letter-spacing:-0.056px;-webkit-text-stroke:0.12px #8a4b30;text-decoration:underline;text-decoration-color:#8a4b3099;">[Schedule]</span>
<span class="t" style="left:373.31px;top:144.00px;font-size:6.454px;line-height:6.454px;color:#8a4b30;-webkit-text-stroke:0.12px #8a4b30;text-decoration:underline;text-decoration-color:#8a4b3099;">[Messages]</span>
<span class="t" style="left:46.71px;top:164.00px;font-size:6.350px;line-height:6.350px;color:#fff;letter-spacing:-0.003px;font-weight:bold;-webkit-text-stroke:0.2px #fff;">Patient Demographic Information</span>
<span class="t" style="left:46.91px;top:173.00px;font-size:6.350px;line-height:6.350px;color:#222;letter-spacing:-0.141px;font-weight:bold;-webkit-text-stroke:0.2px #222;">Patient:</span>
<span class="t" style="left:84.71px;top:173.00px;font-size:6.350px;line-height:6.350px;color:#222;letter-spacing:-0.049px;font-weight:bold;-webkit-text-stroke:0.2px #222;">Rashaa Ahmed</span>
<span class="t" style="left:131.80px;top:173.00px;font-size:6.565px;line-height:6.565px;color:#7c1c1c;font-weight:bold;-webkit-text-stroke:0.2px #7c1c1c;text-decoration:underline;text-decoration-color:#7c1c1c99;">[Prescribe]</span>
<span class="t" style="left:167.81px;top:173.00px;font-size:6.463px;line-height:6.463px;color:#8a4b30;-webkit-text-stroke:0.12px #8a4b30;text-decoration:underline;text-decoration-color:#8a4b3099;">[Change Demographics]</span>
<span class="t" style="left:357.91px;top:174.00px;font-size:6.457px;line-height:6.457px;color:#222;font-weight:bold;-webkit-text-stroke:0.2px #222;">DOB:</span>
<span class="t" style="left:381.88px;top:173.00px;font-size:7.193px;line-height:7.193px;color:#222;font-weight:bold;-webkit-text-stroke:0.2px #222;">12/12/1970</span>
<span class="t" style="left:423.70px;top:174.00px;font-size:6.520px;line-height:6.520px;color:#222;font-weight:bold;-webkit-text-stroke:0.2px #222;">Gender:</span>
<span class="t" style="left:455.80px;top:174.00px;font-size:6.538px;line-height:6.538px;color:#333;-webkit-text-stroke:0.12px #333;">Female</span>
<span class="t" style="left:483.71px;top:174.00px;font-size:6.446px;line-height:6.446px;color:#222;font-weight:bold;-webkit-text-stroke:0.2px #222;">Height:</span>
<span class="t" style="left:543.01px;top:174.00px;font-size:6.414px;line-height:6.414px;color:#333;-webkit-text-stroke:0.12px #333;">5555 cm</span>
<span class="t" style="left:573.61px;top:174.00px;font-size:6.350px;line-height:6.350px;color:#222;letter-spacing:-0.044px;font-weight:bold;-webkit-text-stroke:0.2px #222;">Weight:</span>
<span class="t" style="left:621.21px;top:174.00px;font-size:6.350px;line-height:6.350px;color:#333;letter-spacing:-0.009px;-webkit-text-stroke:0.12px #333;">70 kg</span>
<span class="t" style="left:642.41px;top:174.00px;font-size:6.350px;line-height:6.350px;color:#222;letter-spacing:-0.341px;font-weight:bold;-webkit-text-stroke:0.2px #222;">BSA:</span>
<span class="t" style="left:46.91px;top:184.00px;font-size:6.350px;line-height:6.350px;color:#222;letter-spacing:-0.324px;font-weight:bold;-webkit-text-stroke:0.2px #222;">Phone:</span>
<span class="t" style="left:84.81px;top:184.00px;font-size:6.350px;line-height:6.350px;color:#333;letter-spacing:-0.015px;-webkit-text-stroke:0.12px #333;">(706) 769-8989 (home)</span>
<span class="t" style="left:357.81px;top:183.00px;font-size:6.350px;line-height:6.350px;color:#222;letter-spacing:-0.106px;font-weight:bold;-webkit-text-stroke:0.2px #222;">LOV:</span>
<span class="t" style="left:381.91px;top:183.00px;font-size:6.350px;line-height:6.350px;color:#333;letter-spacing:-0.076px;-webkit-text-stroke:0.12px #333;">04/01/2012</span>
<span class="t" style="left:414.71px;top:183.00px;font-size:6.480px;line-height:6.480px;color:#8a4b30;-webkit-text-stroke:0.12px #8a4b30;text-decoration:underline;text-decoration-color:#8a4b3099;">[Visit Today]</span>
<span class="t" style="left:483.71px;top:183.00px;font-size:6.398px;line-height:6.398px;color:#8a4b30;-webkit-text-stroke:0.12px #8a4b30;text-decoration:underline;text-decoration-color:#8a4b3099;">[Show Patient Visits]</span>
<span class="t" style="left:573.61px;top:183.00px;font-size:6.376px;line-height:6.376px;color:#8a4b30;-webkit-text-stroke:0.12px #8a4b30;text-decoration:underline;text-decoration-color:#8a4b3099;">[Add Office Visit]</span>
<span class="t" style="left:46.81px;top:195.00px;font-size:6.350px;line-height:6.350px;color:#222;letter-spacing:-0.184px;font-weight:bold;-webkit-text-stroke:0.2px #222;">Pharmacy:</span>
<span class="t" style="left:87.31px;top:195.00px;font-size:6.440px;line-height:6.440px;color:#222;-webkit-text-stroke:0.12px #222;">CVS/pharmacy #3678 (R) (E) - 196 ALPS RD SUITE #20-B (CORNER...</span>
<span class="t" style="left:306.91px;top:195.00px;font-size:6.350px;line-height:6.350px;color:#8a4b30;letter-spacing:-0.016px;-webkit-text-stroke:0.12px #8a4b30;text-decoration:underline;text-decoration-color:#8a4b3099;">[View]</span>
<span class="t" style="left:325.91px;top:195.00px;font-size:6.350px;line-height:6.350px;color:#8a4b30;letter-spacing:-0.025px;-webkit-text-stroke:0.12px #8a4b30;text-decoration:underline;text-decoration-color:#8a4b3099;">[Change]</span>
<span class="t" style="left:46.81px;top:205.00px;font-size:6.350px;line-height:6.350px;color:#222;letter-spacing:-0.185px;font-weight:bold;-webkit-text-stroke:0.2px #222;">Formulary:</span>
<span class="t" style="left:84.81px;top:205.00px;font-size:6.350px;line-height:6.350px;color:#2452b4;letter-spacing:-0.118px;-webkit-text-stroke:0.12px #2452b4;">Not entered</span>
<span class="t" style="left:118.81px;top:205.00px;font-size:6.350px;line-height:6.350px;color:#8a4b30;letter-spacing:-0.032px;-webkit-text-stroke:0.12px #8a4b30;text-decoration:underline;text-decoration-color:#8a4b3099;">[Add]</span>
<span class="t" style="left:56.70px;top:234.00px;font-size:6.527px;line-height:6.527px;color:#1d2e82;font-weight:bold;-webkit-text-stroke:0.2px #1d2e82;">Prescribe a Medication</span>
<span class="t" style="left:57.50px;top:245.00px;font-size:6.512px;line-height:6.512px;color:#222;font-weight:bold;-webkit-text-stroke:0.2px #222;">Select Medication for Prescription</span>
<span class="t" style="left:56.81px;top:255.00px;font-size:6.350px;line-height:6.350px;color:#222;letter-spacing:-0.103px;font-weight:bold;-webkit-text-stroke:0.2px #222;">Name:</span>
<span class="t" style="left:193.51px;top:255.00px;font-size:6.350px;line-height:6.350px;color:#222;letter-spacing:-0.118px;-webkit-text-stroke:0.12px #222;">Find</span>
<span class="t" style="left:223.01px;top:255.00px;font-size:6.463px;line-height:6.463px;color:#222;-webkit-text-stroke:0.12px #222;">Category Search</span>
<span class="t" style="left:125.31px;top:266.00px;font-size:6.350px;line-height:6.350px;color:#333;letter-spacing:-0.010px;-webkit-text-stroke:0.12px #333;">No Favorite Prescriptions.</span>
<span class="t" style="left:56.71px;top:286.00px;font-size:6.385px;line-height:6.385px;color:#1d2e82;font-weight:bold;-webkit-text-stroke:0.2px #1d2e82;">Medications</span>
<span class="t" style="left:95.10px;top:286.00px;font-size:6.577px;line-height:6.577px;color:#7c1c1c;font-weight:bold;-webkit-text-stroke:0.2px #7c1c1c;text-decoration:underline;text-decoration-color:#7c1c1c99;">[Manage Medications]</span>
<span class="t" style="left:87.21px;top:296.00px;font-size:6.400px;line-height:6.400px;color:#222;font-weight:bold;-webkit-text-stroke:0.2px #222;">View:</span>
<span class="t" style="left:105.61px;top:296.00px;font-size:6.350px;line-height:6.350px;color:#8a4b30;letter-spacing:-0.138px;-webkit-text-stroke:0.12px #8a4b30;text-decoration:underline;text-decoration-color:#8a4b3099;">[Detail]</span>
<span class="t" style="left:127.01px;top:296.00px;font-size:6.350px;line-height:6.350px;color:#8a4b30;letter-spacing:-0.214px;-webkit-text-stroke:0.12px #8a4b30;text-decoration:underline;text-decoration-color:#8a4b3099;">[Mini]</span>
<span class="t" style="left:192.81px;top:296.00px;font-size:6.350px;line-height:6.350px;color:#222;letter-spacing:-0.171px;font-weight:bold;-webkit-text-stroke:0.2px #222;">Actions:</span>
<span class="t" style="left:218.71px;top:296.00px;font-size:6.354px;line-height:6.354px;color:#8a4b30;-webkit-text-stroke:0.12px #8a4b30;text-decoration:underline;text-decoration-color:#8a4b3099;">[Renew Selected]</span>
<span class="t" style="left:270.61px;top:296.00px;font-size:6.382px;line-height:6.382px;color:#8a4b30;-webkit-text-stroke:0.12px #8a4b30;text-decoration:underline;text-decoration-color:#8a4b3099;">[Select All]</span>
<span class="t" style="left:302.81px;top:296.00px;font-size:6.350px;line-height:6.350px;color:#8a4b30;letter-spacing:-0.052px;-webkit-text-stroke:0.12px #8a4b30;text-decoration:underline;text-decoration-color:#8a4b3099;">[Select None]</span>
<span class="t" style="left:342.61px;top:296.00px;font-size:6.366px;line-height:6.366px;color:#8a4b30;-webkit-text-stroke:0.12px #8a4b30;text-decoration:underline;text-decoration-color:#8a4b3099;">[Check Interactions for Selected]</span>
<span class="t" style="left:56.71px;top:309.00px;font-size:6.350px;line-height:6.350px;color:#333;letter-spacing:-0.093px;-webkit-text-stroke:0.12px #333;">Medication History is:</span>
<span class="t" style="left:130.11px;top:309.00px;font-size:6.355px;line-height:6.355px;color:#333;-webkit-text-stroke:0.12px #333;">Complete</span>
<span class="t" style="left:176.91px;top:309.00px;font-size:6.350px;line-height:6.350px;color:#333;letter-spacing:-0.005px;-webkit-text-stroke:0.12px #333;">Unknown or Incomplete</span>
<span class="t" style="left:254.11px;top:309.00px;font-size:6.350px;line-height:6.350px;color:#8a4b30;letter-spacing:-0.022px;-webkit-text-stroke:0.12px #8a4b30;text-decoration:underline;text-decoration-color:#8a4b3099;">[Medications Reviewed]</span>
<span class="t" style="left:324.11px;top:309.00px;font-size:6.350px;line-height:6.350px;color:#333;letter-spacing:-0.006px;-webkit-text-stroke:0.12px #333;">Last reviewed by Healthy Panacea Staff, 08/29/2011 05:06 AM EDT</span>
<span class="t" style="left:69.11px;top:322.00px;font-size:6.350px;line-height:6.350px;color:#222;letter-spacing:-0.002px;font-weight:bold;-webkit-text-stroke:0.2px #222;">Abilify (aripiprazole)</span>
<span class="t" style="left:132.21px;top:322.00px;font-size:6.399px;line-height:6.399px;color:#333;-webkit-text-stroke:0.12px #333;">1 mg/mL Solution : Take 3 teaspoon by mouth once a day with meals Disp. 450 Rfl #11 by HeDo</span>
<span class="t" style="left:87.31px;top:331.00px;font-size:6.350px;line-height:6.350px;color:#333;letter-spacing:-0.013px;-webkit-text-stroke:0.12px #333;">Actions:</span>
<span class="t" style="left:111.91px;top:331.00px;font-size:6.433px;line-height:6.433px;color:#333;-webkit-text-stroke:0.12px #333;text-decoration:underline;text-decoration-color:#33333399;">[Renew]</span>
<span class="t" style="left:137.61px;top:331.00px;font-size:6.486px;line-height:6.486px;color:#2452b4;-webkit-text-stroke:0.12px #2452b4;text-decoration:underline;text-decoration-color:#2452b499;">[Prescribe]</span>
<span class="t" style="left:169.70px;top:331.00px;font-size:6.545px;line-height:6.545px;color:#a0301c;-webkit-text-stroke:0.12px #a0301c;text-decoration:underline;text-decoration-color:#a0301c99;">[Stop]</span>
<span class="t" style="left:69.21px;top:342.00px;font-size:6.459px;line-height:6.459px;color:#222;font-weight:bold;-webkit-text-stroke:0.2px #222;">aspirin, buffered</span>
<span class="t" style="left:121.81px;top:342.00px;font-size:6.399px;line-height:6.399px;color:#333;-webkit-text-stroke:0.12px #333;">500 mg Tablet : 1 tablet by mouth three times a day with meals Disp. 30 NR by HeDo</span>
<span class="t" style="left:87.31px;top:351.00px;font-size:6.350px;line-height:6.350px;color:#333;letter-spacing:-0.013px;-webkit-text-stroke:0.12px #333;">Actions:</span>
<span class="t" style="left:111.91px;top:351.00px;font-size:6.433px;line-height:6.433px;color:#333;-webkit-text-stroke:0.12px #333;text-decoration:underline;text-decoration-color:#33333399;">[Renew]</span>
<span class="t" style="left:137.61px;top:351.00px;font-size:6.486px;line-height:6.486px;color:#2452b4;-webkit-text-stroke:0.12px #2452b4;text-decoration:underline;text-decoration-color:#2452b499;">[Prescribe]</span>
<span class="t" style="left:169.70px;top:351.00px;font-size:6.545px;line-height:6.545px;color:#a0301c;-webkit-text-stroke:0.12px #a0301c;text-decoration:underline;text-decoration-color:#a0301c99;">[Stop]</span>
<span class="t" style="left:69.21px;top:362.00px;font-size:6.350px;line-height:6.350px;color:#222;letter-spacing:-0.119px;font-weight:bold;-webkit-text-stroke:0.2px #222;">Iodine</span>
<span class="t" style="left:89.31px;top:362.00px;font-size:6.404px;line-height:6.404px;color:#333;-webkit-text-stroke:0.12px #333;">Liquid : Take 3 ounce by mouth three times a day before exercise</span>
<span class="t" style="left:276.11px;top:362.00px;font-size:6.350px;line-height:6.350px;color:#b0702a;letter-spacing:-0.043px;-webkit-text-stroke:0.12px #b0702a;">No Quantity</span>
<span class="t" style="left:310.81px;top:362.00px;font-size:6.386px;line-height:6.386px;color:#333;-webkit-text-stroke:0.12px #333;">Rfl #2 by HeDo</span>
<span class="t" style="left:87.31px;top:371.00px;font-size:6.350px;line-height:6.350px;color:#333;letter-spacing:-0.013px;-webkit-text-stroke:0.12px #333;">Actions:</span>
<span class="t" style="left:111.91px;top:371.00px;font-size:6.433px;line-height:6.433px;color:#333;-webkit-text-stroke:0.12px #333;text-decoration:underline;text-decoration-color:#33333399;">[Renew]</span>
<span class="t" style="left:137.61px;top:371.00px;font-size:6.486px;line-height:6.486px;color:#2452b4;-webkit-text-stroke:0.12px #2452b4;text-decoration:underline;text-decoration-color:#2452b499;">[Prescribe]</span>
<span class="t" style="left:169.70px;top:371.00px;font-size:6.545px;line-height:6.545px;color:#a0301c;-webkit-text-stroke:0.12px #a0301c;text-decoration:underline;text-decoration-color:#a0301c99;">[Stop]</span>
<span class="t" style="left:69.21px;top:382.00px;font-size:6.350px;line-height:6.350px;color:#222;letter-spacing:-0.018px;font-weight:bold;-webkit-text-stroke:0.2px #222;">lisinopril</span>
<span class="t" style="left:97.31px;top:382.00px;font-size:6.371px;line-height:6.371px;color:#333;-webkit-text-stroke:0.12px #333;">20 mg Tablet : Take 1 tablet by mouth three times a day after meals Disp. 270 Rfl #6 (last: 09/25/2012) by HeDo started on: 09/25/2012 stop on: 05/01/2013</span>
<span class="t" style="left:87.31px;top:391.00px;font-size:6.350px;line-height:6.350px;color:#333;letter-spacing:-0.013px;-webkit-text-stroke:0.12px #333;">Actions:</span>
<span class="t" style="left:111.91px;top:391.00px;font-size:6.433px;line-height:6.433px;color:#333;-webkit-text-stroke:0.12px #333;text-decoration:underline;text-decoration-color:#33333399;">[Renew]</span>
<span class="t" style="left:137.61px;top:391.00px;font-size:6.486px;line-height:6.486px;color:#2452b4;-webkit-text-stroke:0.12px #2452b4;text-decoration:underline;text-decoration-color:#2452b499;">[Prescribe]</span>
<span class="t" style="left:169.70px;top:391.00px;font-size:6.545px;line-height:6.545px;color:#a0301c;-webkit-text-stroke:0.12px #a0301c;text-decoration:underline;text-decoration-color:#a0301c99;">[Stop]</span>
<span class="t" style="left:188.91px;top:391.00px;font-size:6.397px;line-height:6.397px;color:#8e2a20;-webkit-text-stroke:0.12px #8e2a20;text-decoration:underline;text-decoration-color:#8e2a2099;">[Copy To Patient]</span>
<span class="t" style="left:69.81px;top:402.00px;font-size:6.474px;line-height:6.474px;color:#222;font-weight:bold;-webkit-text-stroke:0.2px #222;">Trilipix (fenofibric acid (choline))</span>
<span class="t" style="left:171.81px;top:402.00px;font-size:6.377px;line-height:6.377px;color:#333;-webkit-text-stroke:0.12px #333;">135 mg Capsule, Delayed Release(E.C.) : 2 capsule by mouth three times a day after meals Disp. 180 Rfl #6 (last: 09/25/2012) by HeDo started on: 09/25/2012</span>
<span class="t" style="left:87.31px;top:411.00px;font-size:6.350px;line-height:6.350px;color:#333;letter-spacing:-0.013px;-webkit-text-stroke:0.12px #333;">Actions:</span>
<span class="t" style="left:111.91px;top:411.00px;font-size:6.433px;line-height:6.433px;color:#333;-webkit-text-stroke:0.12px #333;text-decoration:underline;text-decoration-color:#33333399;">[Renew]</span>
<span class="t" style="left:137.61px;top:411.00px;font-size:6.486px;line-height:6.486px;color:#2452b4;-webkit-text-stroke:0.12px #2452b4;text-decoration:underline;text-decoration-color:#2452b499;">[Prescribe]</span>
<span class="t" style="left:169.70px;top:411.00px;font-size:6.545px;line-height:6.545px;color:#a0301c;-webkit-text-stroke:0.12px #a0301c;text-decoration:underline;text-decoration-color:#a0301c99;">[Stop]</span>
<span class="t" style="left:188.91px;top:411.00px;font-size:6.397px;line-height:6.397px;color:#8e2a20;-webkit-text-stroke:0.12px #8e2a20;text-decoration:underline;text-decoration-color:#8e2a2099;">[Copy To Patient]</span>
<span class="t" style="left:57.01px;top:431.00px;font-size:6.498px;line-height:6.498px;color:#1d2e82;font-weight:bold;-webkit-text-stroke:0.2px #1d2e82;">Current Allergies/Adverse Reactions</span>
<span class="t" style="left:176.90px;top:431.00px;font-size:6.539px;line-height:6.539px;color:#7c1c1c;font-weight:bold;-webkit-text-stroke:0.2px #7c1c1c;text-decoration:underline;text-decoration-color:#7c1c1c99;">[Manage Allergies]</span>
<span class="t" style="left:56.81px;top:441.00px;font-size:6.350px;line-height:6.350px;color:#8a4b30;letter-spacing:-0.012px;-webkit-text-stroke:0.12px #8a4b30;text-decoration:underline;text-decoration-color:#8a4b3099;">[Allergies Reviewed]</span>
<span class="t" style="left:382.71px;top:431.00px;font-size:6.350px;line-height:6.350px;color:#1d2e82;letter-spacing:-0.063px;font-weight:bold;-webkit-text-stroke:0.2px #1d2e82;">Problems</span>
<span class="t" style="left:418.71px;top:431.00px;font-size:6.375px;line-height:6.375px;color:#7c1c1c;font-weight:bold;-webkit-text-stroke:0.2px #7c1c1c;text-decoration:underline;text-decoration-color:#7c1c1c99;">[Manage Problems]</span>
<span class="t" style="left:483.20px;top:431.00px;font-size:6.581px;line-height:6.581px;color:#6b3a28;-webkit-text-stroke:0.12px #6b3a28;text-decoration:underline;text-decoration-color:#6b3a2899;">[Show All]</span>
<span class="t" style="left:381.81px;top:440.00px;font-size:6.435px;line-height:6.435px;color:#8a4b30;-webkit-text-stroke:0.12px #8a4b30;text-decoration:underline;text-decoration-color:#8a4b3099;">[Problems Reviewed]</span>
<span class="t" style="left:594.10px;top:450.00px;font-size:6.563px;line-height:6.563px;color:#222;font-weight:bold;-webkit-text-stroke:0.2px #222;">Onset</span>
<span class="t" style="left:622.71px;top:450.00px;font-size:6.447px;line-height:6.447px;color:#222;font-weight:bold;-webkit-text-stroke:0.2px #222;">Modified</span>
<span class="t" style="left:383.81px;top:453.00px;font-size:6.350px;line-height:6.350px;color:#222;letter-spacing:-0.249px;font-weight:bold;-webkit-text-stroke:0.2px #222;">Order Description</span>
<span class="t" style="left:570.79px;top:453.00px;font-size:6.881px;line-height:6.881px;color:#222;font-weight:bold;-webkit-text-stroke:0.2px #222;">Stat</span>
<!-- clip iframe bottom -->
<div class="b" style="left:20.2px;top:453.5px;width:644px;height:14.5px;background:#fff"></div>
<div class="b" style="left:19px;top:453.5px;width:653px;height:1px;background:#e6e6e6"></div>

</body></html>
